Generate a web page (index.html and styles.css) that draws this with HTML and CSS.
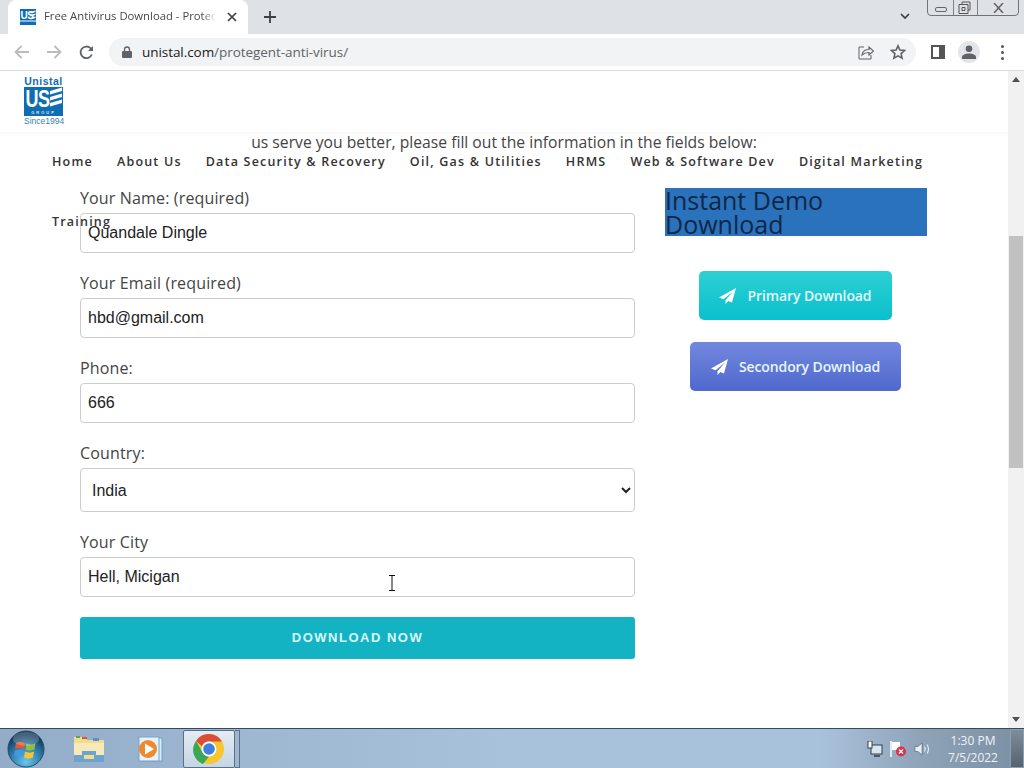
FILE: index.html
```html
<!DOCTYPE html>
<html lang="en">
<head>
  <meta charset="UTF-8">
  <title>Free Antivirus Download - Protegent</title>
  <link rel="stylesheet" href="styles.css">
</head>
<body>

  <!-- tab strip -->
  <div class="tabstrip">
    <div class="tab">
      <svg class="tab-favicon" width="16" height="16" viewBox="0 0 16 16">
        <rect width="16" height="16" fill="#0f6db3"/>
        <text x="0.500" y="10" class="fav-text">US</text>
        <path d="M10.500 3l5-1.500v1.500l-5 1.500zM10.500 6l5-1.500V6l-5 1.500zM10.500 9l5-1.500V9l-5 1.500z" fill="#fff"/>
        <rect y="11.500" width="16" height="1" fill="#fff"/>
      </svg>
      <span class="tab-title">Free Antivirus Download - Protec</span>
      <svg class="tab-close" width="10" height="10" viewBox="0 0 10 10"><path d="M1 1l8 8M9 1l-8 8" stroke="#3c4043" stroke-width="1.7"/></svg>
    </div>
    <svg class="new-tab" width="12" height="12" viewBox="0 0 12 12"><path d="M6 0v12M0 6h12" stroke="#3c4043" stroke-width="1.8"/></svg>
    <svg class="tab-list" width="10" height="6" viewBox="0 0 10 6"><path d="M1 1l4 4 4-4" fill="none" stroke="#3c4043" stroke-width="1.7"/></svg>
    <div class="win-controls">
      <div class="win-btn win-min"><span class="min-glyph"></span></div>
      <div class="win-btn win-max">
        <svg width="13" height="13" viewBox="0 0 13 13"><path d="M4 3V1h8v8h-2M1 3.500h9v9H1zM4 6.500h3v3H4z" fill="none" stroke="#555" stroke-width="1"/></svg>
      </div>
      <div class="win-btn win-close">
        <svg width="11" height="10" viewBox="0 0 11 10"><path d="M1 0l9 10M10 0L1 10" stroke="#666" stroke-width="1.600"/></svg>
      </div>
    </div>
  </div>

  <!-- address bar -->
  <div class="toolbar">
    <svg class="nav-icon" width="16" height="14" viewBox="0 0 16 14"><path d="M15 7H2M7.500 1L1.500 7l6 6" fill="none" stroke="#b9bbbe" stroke-width="1.800"/></svg>
    <svg class="nav-icon" width="16" height="14" viewBox="0 0 16 14"><path d="M1 7h13M8.500 1l6 6-6 6" fill="none" stroke="#b9bbbe" stroke-width="1.800"/></svg>
    <svg class="nav-icon" width="15" height="15" viewBox="0 0 15 15"><path d="M12.800 9.500A5.800 5.800 0 1 1 11.500 3.200L13.500 5" fill="none" stroke="#5f6368" stroke-width="1.800"/><path d="M14 1v5H9z" fill="#5f6368"/></svg>
    <div class="omnibox">
      <svg class="lock" width="10" height="12" viewBox="0 0 10 12"><path d="M2.500 5V3.500a2.500 2.500 0 0 1 5 0V5" fill="none" stroke="#5f6368" stroke-width="1.300"/><rect y="5" width="10" height="7" rx="1" fill="#5f6368"/></svg>
      <span class="url"><span class="url-host">unistal.com</span>/protegent-anti-virus/</span>
      <svg class="share" width="16" height="16" viewBox="0 0 16 16"><path d="M6 3H1v12h12v-4" fill="none" stroke="#5f6368" stroke-width="1"/><path d="M4 11c.5-3.500 3-5.500 7-5.500V3l4.500 4-4.500 4V8.500c-3 0-5 .5-7 2.500z" fill="none" stroke="#5f6368" stroke-width="1.100"/></svg>
      <svg class="star" width="16" height="16" viewBox="0 0 16 16"><path d="M8 1.800l1.900 4.200 4.600.5-3.400 3.100 1 4.500L8 11.800l-4.100 2.300 1-4.500L1.500 6.500 6.100 6z" fill="none" stroke="#5f6368" stroke-width="1.600"/></svg>
    </div>
    <span class="side-panel"></span>
    <div class="avatar">
      <svg width="14" height="14" viewBox="0 0 14 14"><circle cx="7" cy="3.800" r="3.300" fill="#5f6368"/><path d="M0 14v-2c0-2 3.500-3.500 7-3.500s7 1.500 7 3.500v2z" fill="#5f6368"/></svg>
    </div>
    <div class="menu-dots"><i></i><i></i><i></i></div>
  </div>

  <!-- browser content -->
  <div class="viewport">
    <div class="page">

      <header class="site-header">
        <div class="logo">
          <div class="logo-top">Unistal</div>
          <svg class="logo-mark" width="39" height="29" viewBox="0 0 39 29">
            <rect width="39" height="29" fill="#0f6db3"/>
            <text x="1.500" y="15" transform="scale(1 1.300)" class="logo-letters">US</text>
            <path d="M26 4l12-3.500v3.500l-12 3.500zM26 10l12-3.500V10l-12 3.500zM26 16l12-3.500V16l-12 3.500z" fill="#fff"/>
            <text x="19.500" y="26.500" text-anchor="middle" class="logo-group">GROUP</text>
          </svg>
          <div class="logo-since">Since1994</div>
        </div>
        <nav class="main-nav">
          <a>Home</a>
          <a>About Us</a>
          <a>Data Security &amp; Recovery</a>
          <a>Oil, Gas &amp; Utilities</a>
          <a>HRMS</a>
          <a>Web &amp; Software Dev</a>
          <a>Digital Marketing</a>
          <a>Training</a>
        </nav>
      </header>

      <p class="intro">us serve you better, please fill out the information in the fields below:</p>

      <div class="content">
        <form class="demo-form">
          <label class="field">
            <span class="field-label">Your Name: (required)</span>
            <input class="field-input" type="text" value="Quandale Dingle">
          </label>
          <label class="field">
            <span class="field-label">Your Email (required)</span>
            <input class="field-input" type="text" value="hbd@gmail.com">
          </label>
          <label class="field">
            <span class="field-label">Phone:</span>
            <input class="field-input" type="text" value="666">
          </label>
          <label class="field">
            <span class="field-label">Country:</span>
            <select class="field-input field-select"><option>India</option></select>
          </label>
          <label class="field">
            <span class="field-label">Your City</span>
            <input class="field-input" type="text" value="Hell, Micigan">
          </label>
          <button class="submit-btn" type="button">DOWNLOAD NOW</button>
        </form>

        <aside class="sidebar">
          <h2 class="sidebar-title">Instant Demo Download</h2>
          <a class="dl-btn dl-primary">
            <svg width="17" height="16" viewBox="0 0 17 16"><path d="M17 0L0 9.500l4.500 1.800L14 3.500 6.500 12.300V16l2.800-3 3.700 1.500z" fill="#fff"/></svg>
            Primary Download
          </a>
          <a class="dl-btn dl-secondary">
            <svg width="17" height="16" viewBox="0 0 17 16"><path d="M17 0L0 9.500l4.500 1.800L14 3.500 6.500 12.300V16l2.800-3 3.700 1.500z" fill="#fff"/></svg>
            Secondory Download
          </a>
        </aside>
      </div>

      <svg class="text-cursor" width="8" height="16" viewBox="0 0 8 16"><path d="M1 .5h6M1 15.500h6M4 .5v15" fill="none" stroke="#111" stroke-width="1"/></svg>
    </div>

    <div class="scrollbar">
      <span class="arrow-up"></span>
      <div class="scroll-track"><div class="scroll-thumb"></div></div>
      <span class="arrow-down"></span>
    </div>
  </div>

  <!-- windows taskbar -->
  <div class="taskbar">
    <svg class="start-orb" width="38" height="38" viewBox="0 0 38 38">
      <defs>
        <radialGradient id="orb" cx="50%" cy="85%" r="75%">
          <stop offset="0" stop-color="#6cc6ee"/>
          <stop offset="0.6" stop-color="#2a78a8"/>
          <stop offset="1" stop-color="#12385a"/>
        </radialGradient>
      </defs>
      <circle cx="19" cy="19" r="18" fill="url(#orb)" stroke="#2b4a62"/>
      <path d="M9 13c3-1.500 5-1.500 9 0l-1 6c-3-1.500-6-1.500-9 0z" fill="#e8552d"/>
      <path d="M19.500 13.500c3 1.500 6 1.500 9 0l-1 6c-3 1.500-6 1.500-9 0z" fill="#8ebf3c"/>
      <path d="M8 20.500c3-1.500 5-1.500 9 0l-1 6c-3-1.500-6-1.500-9 0z" fill="#3f9be0"/>
      <path d="M18 21.500c3 1.500 6 1.500 9 0l-1 6c-3 1.500-6 1.500-9 0z" fill="#f4c534"/>
      <ellipse cx="19" cy="9" rx="13" ry="7" fill="#fff" opacity="0.22"/>
    </svg>

    <div class="task-item task-folder">
      <svg width="32" height="28" viewBox="0 0 32 28">
        <path d="M1 2h11l2 3h17v21H1z" fill="#f3dc8e"/>
        <rect x="3" y="1" width="4" height="2" fill="#56a845"/>
        <rect x="9" y="2" width="5" height="2" fill="#d9533f"/>
        <rect x="20" y="3" width="6" height="3" fill="#5a93c9"/>
        <rect x="1" y="8" width="30" height="12" fill="#f8eab8"/>
        <path d="M1 20h8v-4h14v4h8v7H1z" fill="#6ba5cf"/>
        <rect x="11" y="20" width="10" height="4" fill="#f3dc8e"/>
      </svg>
    </div>

    <div class="task-item task-media">
      <svg width="28" height="28" viewBox="0 0 28 28">
        <rect x="7" y="3" width="20" height="23" fill="#dcebf5" stroke="#6ea4cb"/>
        <rect x="4" y="2" width="20" height="24" fill="#e9f2f9" stroke="#6ea4cb"/>
        <circle cx="13" cy="14" r="9" fill="#ee8a2c"/>
        <path d="M10 8.500l9 5.500-9 5.500z" fill="#fff"/>
      </svg>
    </div>

    <div class="task-item task-chrome">
      <svg width="32" height="32" viewBox="0 0 32 32">
        <circle cx="16" cy="16" r="15" fill="#f6c62d"/>
        <path d="M16 1a15 15 0 0 1 13 7.500H16a7.500 7.500 0 0 0-7 4.800L3 8A15 15 0 0 1 16 1z" fill="#dd4b39"/>
        <path d="M3 8l6.500 11.200a7.500 7.500 0 0 0 6.500 4.300L10 31A15 15 0 0 1 3 8z" fill="#3aa757"/>
        <circle cx="16" cy="16" r="7.500" fill="#fff"/>
        <circle cx="16" cy="16" r="5.800" fill="#3e7fe0"/>
      </svg>
    </div>
    <span class="task-stack"></span>

    <div class="tray">
      <svg width="16" height="16" viewBox="0 0 16 16"><rect x="4" y="4" width="11" height="9" fill="#d8e6ee" stroke="#2e3f4a"/><path d="M7 15h6" stroke="#2e3f4a" stroke-width="1.500"/><rect x="1" y="0" width="4" height="7" fill="#fff" stroke="#2e3f4a"/></svg>
      <svg width="17" height="16" viewBox="0 0 17 16"><path d="M1 0v16" stroke="#fff" stroke-width="1.500"/><path d="M2 1h8v8H2z" fill="#fff"/><circle cx="11" cy="10.500" r="5" fill="#d8354c"/><path d="M9 8.500l4 4M13 8.500l-4 4" stroke="#fff" stroke-width="1.200"/></svg>
      <svg width="16" height="14" viewBox="0 0 16 14"><path d="M1 4.500h3L8 1v12L4 9.500H1z" fill="#e9eff4" stroke="#4a5c6a" stroke-width=".6"/><path d="M10.500 4.500c1 1.500 1 3.500 0 5M13 2.500c2 2.500 2 6.500 0 9" fill="none" stroke="#e9eff4" stroke-width="1.100"/></svg>
    </div>
    <div class="clock">
      <div>1:30 PM</div>
      <div>7/5/2022</div>
    </div>
    <span class="show-desktop"></span>
  </div>

</body>
</html>
```

FILE: styles.css
```css
html, body {
  margin: 0;
  height: 100%;
  overflow: hidden;
}

body {
  display: flex;
  flex-direction: column;
  width: 1024px;
  height: 768px;
  font-family: 'Open Sans', sans-serif;
  color: #333;
  background: #fff;
}

/* tab strip */
.tabstrip {
  position: relative;
  display: flex;
  align-items: flex-end;
  height: 34px;
  flex: none;
  background: #dee1e6;
}

.tab {
  display: flex;
  align-items: center;
  box-sizing: border-box;
  width: 240px;
  height: 34px;
  margin-left: 8px;
  padding: 0 11px 1px 12px;
  background: #fff;
  border-radius: 8px 8px 0 0;
}

.fav-text {
  font: bold 10px 'Liberation Sans', sans-serif;
  letter-spacing: -0.5px;
  fill: #fff;
}

.tab-title {
  width: 172px;
  margin: -2px 0 0 8px;
  white-space: nowrap;
  font-size: 11.300px;
  color: #45494d;
  -webkit-mask-image: linear-gradient(90deg, #000 92%, transparent 100%);
  mask-image: linear-gradient(90deg, #000 92%, transparent 100%);
}

.tab-close {
  margin-left: 11px;
}

.new-tab {
  margin: 0 0 11px 16px;
}

.tab-list {
  margin: 0 0 15px 624px;
}

.win-controls {
  position: absolute;
  top: -1px;
  left: 927px;
  display: flex;
  height: 17px;
  border: 1px solid #6f747b;
  border-radius: 0 0 4px 4px;
  box-sizing: border-box;
}

.win-btn {
  display: flex;
  align-items: center;
  justify-content: center;
  border-right: 1px solid #7f848b;
}

.win-min {
  width: 25px;
}

.win-max {
  width: 24px;
  padding-right: 3px;
  box-sizing: border-box;
}

.win-close {
  width: 40px;
  border-right: 0;
}

.min-glyph {
  width: 10px;
  height: 3px;
  margin-top: 4px;
  border: 1px solid #666;
  border-radius: 2px;
}

/* address bar */
.toolbar {
  display: flex;
  align-items: center;
  box-sizing: border-box;
  height: 37px;
  flex: none;
  padding-left: 14px;
  background: #fff;
  border-bottom: 1px solid #d9dbde;
}

.nav-icon {
  margin-right: 16px;
}

.nav-icon:nth-child(3) {
  margin: 0 15px 0 1px;
}

.omnibox {
  display: flex;
  align-items: center;
  box-sizing: border-box;
  width: 807px;
  height: 28px;
  padding: 0 10px 0 13px;
  background: #f1f3f4;
  border-radius: 14px;
}

.url {
  flex: 1;
  margin-left: 10px;
  font-size: 13.500px;
  letter-spacing: -0.06px;
  color: #5f6368;
}

.url-host {
  color: #202124;
}

.star {
  margin-left: 16px;
}

.side-panel {
  box-sizing: border-box;
  width: 14px;
  height: 14px;
  margin-left: 15px;
  border: 2px solid #555;
  border-right-width: 6px;
  background: #fff;
}

.avatar {
  display: flex;
  align-items: center;
  justify-content: center;
  width: 22px;
  height: 22px;
  margin-left: 13px;
  border-radius: 50%;
  background: #e3e5e8;
}

.menu-dots {
  display: flex;
  flex-direction: column;
  gap: 3px;
  margin-left: 21px;
}

.menu-dots i {
  width: 3px;
  height: 3px;
  border-radius: 50%;
  background: #555;
}

/* page */
.viewport {
  display: flex;
  height: 657px;
  flex: none;
}

.page {
  position: relative;
  width: 1008px;
  overflow: hidden;
  background: #fff;
}

.site-header {
  position: absolute;
  top: 0;
  left: 0;
  width: 100%;
  height: 61px;
  background: #fff;
  box-shadow: 0 3px 3px rgba(0, 0, 0, 0.025);
}

.logo {
  width: 39px;
  margin: 5px 0 0 24px;
  text-align: center;
  color: #0f6db3;
}

.logo-top {
  height: 11px;
  font: bold 10.500px/10px 'Liberation Sans', sans-serif;
  letter-spacing: 0.5px;
  white-space: nowrap;
}

.logo-mark {
  display: block;
}

.logo-letters {
  font: bold 18px 'Liberation Sans', sans-serif;
  letter-spacing: -0.5px;
  fill: #fff;
}

.logo-group {
  font: bold 4px 'Liberation Sans', sans-serif;
  letter-spacing: 2px;
  fill: #d7e8f5;
}

.logo-since {
  font: 8.500px/10px 'Liberation Sans', sans-serif;
  white-space: nowrap;
  color: #3f7fb5;
}

.main-nav {
  position: absolute;
  top: 82px;
  left: 52px;
  display: flex;
  flex-wrap: wrap;
  gap: 42px 24px;
  width: 890px;
  font-size: 12.500px;
  font-weight: 600;
  line-height: 18px;
  letter-spacing: 1.200px;
  color: #333;
}

.intro {
  margin: 0;
  padding-top: 60px;
  font-size: 15.700px;
  line-height: 22px;
  text-align: center;
  color: #444;
}

.content {
  display: grid;
  grid-template-columns: 555px 262px;
  gap: 30px;
  padding: 33px 0 0 80px;
}

.field {
  display: block;
  margin-bottom: 18px;
}

.field-label {
  display: block;
  height: 27px;
  font-size: 16px;
  line-height: 25px;
  letter-spacing: 0.15px;
  color: #444;
}

.field-input {
  display: block;
  box-sizing: border-box;
  width: 100%;
  height: 40px;
  padding: 0 7px;
  font: 16px 'Liberation Sans', sans-serif;
  color: #222;
  background: #fff;
  border: 1px solid #ccc;
  border-radius: 4px;
  outline: 0;
}

.field-select {
  height: 44px;
}

.submit-btn {
  display: block;
  width: 100%;
  height: 42px;
  margin-top: 20px;
  padding-bottom: 2px;
  font: bold 13px 'Liberation Sans', sans-serif;
  letter-spacing: 1.500px;
  color: #d9f8fb;
  background: #13b3c4;
  border: 0;
  border-radius: 3px;
}

.sidebar {
  display: flex;
  flex-direction: column;
  align-items: center;
  margin-top: 2px;
}

.sidebar-title {
  align-self: stretch;
  margin: 0 0 35px;
  font-size: 25px;
  font-weight: 500;
  line-height: 24px;
  color: #0f2748;
  background: #2a72bb;
}

.dl-btn {
  display: flex;
  align-items: center;
  justify-content: center;
  gap: 11px;
  box-sizing: border-box;
  height: 49px;
  margin-left: -1px;
  font-size: 14px;
  font-weight: 600;
  letter-spacing: -0.1px;
  color: #e4f8fa;
  border-radius: 5px;
}

.dl-primary {
  width: 193px;
  margin-bottom: 22px;
  background: linear-gradient(#2cd0d4, #0abfcc);
}

.dl-secondary {
  width: 211px;
  background: linear-gradient(#7288dd, #5068cf);
}

.text-cursor {
  position: absolute;
  top: 504px;
  left: 388px;
}

/* scrollbar */
.scrollbar {
  display: flex;
  flex-direction: column;
  width: 16px;
  background: #f1f1f1;
}

.scroll-track {
  flex: 1;
  padding: 0 1px;
}

.scroll-thumb {
  height: 232px;
  margin-top: 148px;
  background: #c1c1c1;
}

.arrow-up,
.arrow-down {
  align-self: center;
  width: 0;
  height: 0;
  margin: 6px 0;
  border: 4px solid transparent;
  border-top: 0;
  border-bottom: 5px solid #505050;
}

.arrow-down {
  border-top: 5px solid #505050;
  border-bottom: 0;
}

/* taskbar */
.taskbar {
  display: flex;
  align-items: center;
  box-sizing: border-box;
  height: 40px;
  flex: none;
  border-top: 1px solid #37495a;
  background: linear-gradient(90deg, #93adc8 0%, #a9c2dc 50%, #a9c2dc 80%, #8ea3b8 90%, #7a8fa3 100%);
}

.start-orb {
  margin-left: 7px;
}

.task-item {
  display: flex;
  align-items: center;
  justify-content: center;
  height: 38px;
}

.task-folder {
  width: 60px;
  margin-left: 14px;
}

.task-media {
  width: 60px;
}

.task-chrome {
  width: 52px;
  margin-left: 4px;
  box-sizing: border-box;
  background: linear-gradient(#e4ecf4, #c6d5e4);
  border: 1px solid #5c7085;
  border-radius: 2px;
}

.task-stack {
  width: 5px;
  height: 38px;
  margin-right: auto;
  border: 1px solid #5c7085;
  border-left: 0;
  box-sizing: border-box;
}

.tray {
  display: flex;
  align-items: center;
  gap: 7px;
  margin-right: 10px;
}

.clock {
  width: 66px;
  margin-right: 4px;
  font: 12px/17px 'Open Sans', sans-serif;
  text-align: center;
  color: #eef3f7;
}

.show-desktop {
  box-sizing: border-box;
  width: 14px;
  height: 39px;
  background: linear-gradient(#7e8d9a, #55636f);
  border: 1px solid #8ea0b0;
}
```
